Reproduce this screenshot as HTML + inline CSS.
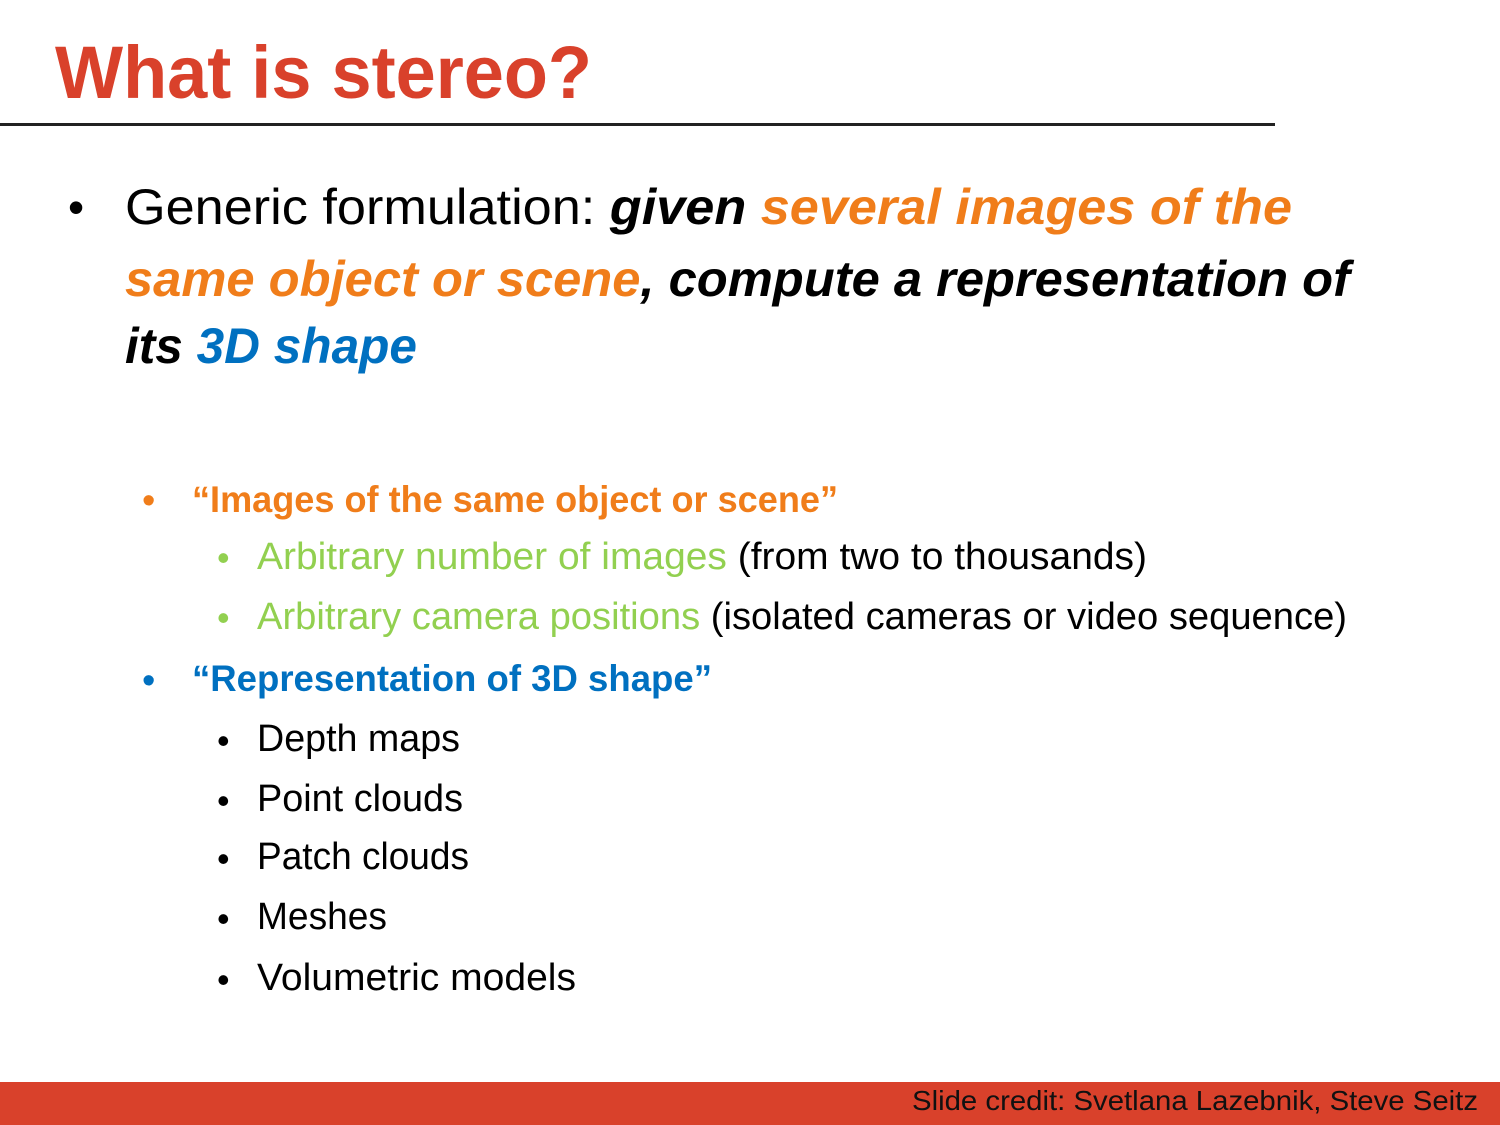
<!DOCTYPE html>
<html><head><meta charset="utf-8"><style>
html,body{margin:0;padding:0}
body{width:1500px;height:1125px;position:relative;overflow:hidden;background:#fff;font-family:"Liberation Sans",Arial,sans-serif}
.l{position:absolute;white-space:nowrap;line-height:1;transform-origin:0 0}
.b{position:absolute;line-height:1}
.o{color:#F07D1A}.g{color:#92D050}.bl{color:#0070C0}
</style></head><body>
<div class="l" style="left:55px;top:36px;font-size:74px;font-weight:bold;color:#D9412B;--w:537">What is stereo?</div>
<div style="position:absolute;left:0;top:123px;width:1275px;height:3px;background:#222"></div>

<div class="b" style="left:68px;top:184px;font-size:46px">•</div>
<div class="l" style="left:125px;top:182px;font-size:50px;--w:1167">Generic formulation: <b><i>given <span class="o">several images of the</span></i></b></div>
<div class="l" style="left:125px;top:254px;font-size:50px;font-weight:bold;font-style:italic;--w:1225"><span class="o">same object or scene</span>, compute a representation of</div>
<div class="l" style="left:125px;top:321px;font-size:50px;font-weight:bold;font-style:italic;--w:292">its <span class="bl">3D shape</span></div>

<div class="b o" style="left:142px;top:482px;font-size:38px">•</div>
<div class="l o" style="left:192px;top:481px;font-size:37px;font-weight:bold;--w:646">“Images of the same object or scene”</div>
<div class="b g" style="left:217px;top:540px;font-size:36px">•</div>
<div class="l" style="left:257px;top:538px;font-size:38px;--w:890"><span class="g">Arbitrary number of images</span> (from two to thousands)</div>
<div class="b g" style="left:217px;top:600px;font-size:36px">•</div>
<div class="l" style="left:257px;top:598px;font-size:38px;--w:1090"><span class="g">Arbitrary camera positions</span> (isolated cameras or video sequence)</div>
<div class="b bl" style="left:142px;top:662px;font-size:38px">•</div>
<div class="l bl" style="left:192px;top:660px;font-size:37px;font-weight:bold;--w:520">“Representation of 3D shape”</div>

<div class="b" style="left:217px;top:723px;font-size:36px">•</div>
<div class="l" style="left:257px;top:720px;font-size:38px;--w:203">Depth maps</div>
<div class="b" style="left:217px;top:783px;font-size:36px">•</div>
<div class="l" style="left:257px;top:780px;font-size:38px;--w:206">Point clouds</div>
<div class="b" style="left:217px;top:841px;font-size:36px">•</div>
<div class="l" style="left:257px;top:838px;font-size:38px;--w:212">Patch clouds</div>
<div class="b" style="left:217px;top:901px;font-size:36px">•</div>
<div class="l" style="left:257px;top:898px;font-size:38px;--w:130">Meshes</div>
<div class="b" style="left:217px;top:962px;font-size:36px">•</div>
<div class="l" style="left:257px;top:959px;font-size:38px;--w:319">Volumetric models</div>

<div style="position:absolute;left:0;top:1082px;width:1500px;height:43px;background:#D9412B"></div>
<div class="l" style="left:912px;top:1087px;font-size:28px;color:#111;--w:566">Slide credit: Svetlana Lazebnik, Steve Seitz</div>
<script>
document.querySelectorAll('.l').forEach(function(e){
  var w=parseFloat(getComputedStyle(e).getPropertyValue('--w'));
  if(w){var r=w/e.getBoundingClientRect().width;e.style.transform='scaleX('+r+')';}
});
</script>
</body></html>
